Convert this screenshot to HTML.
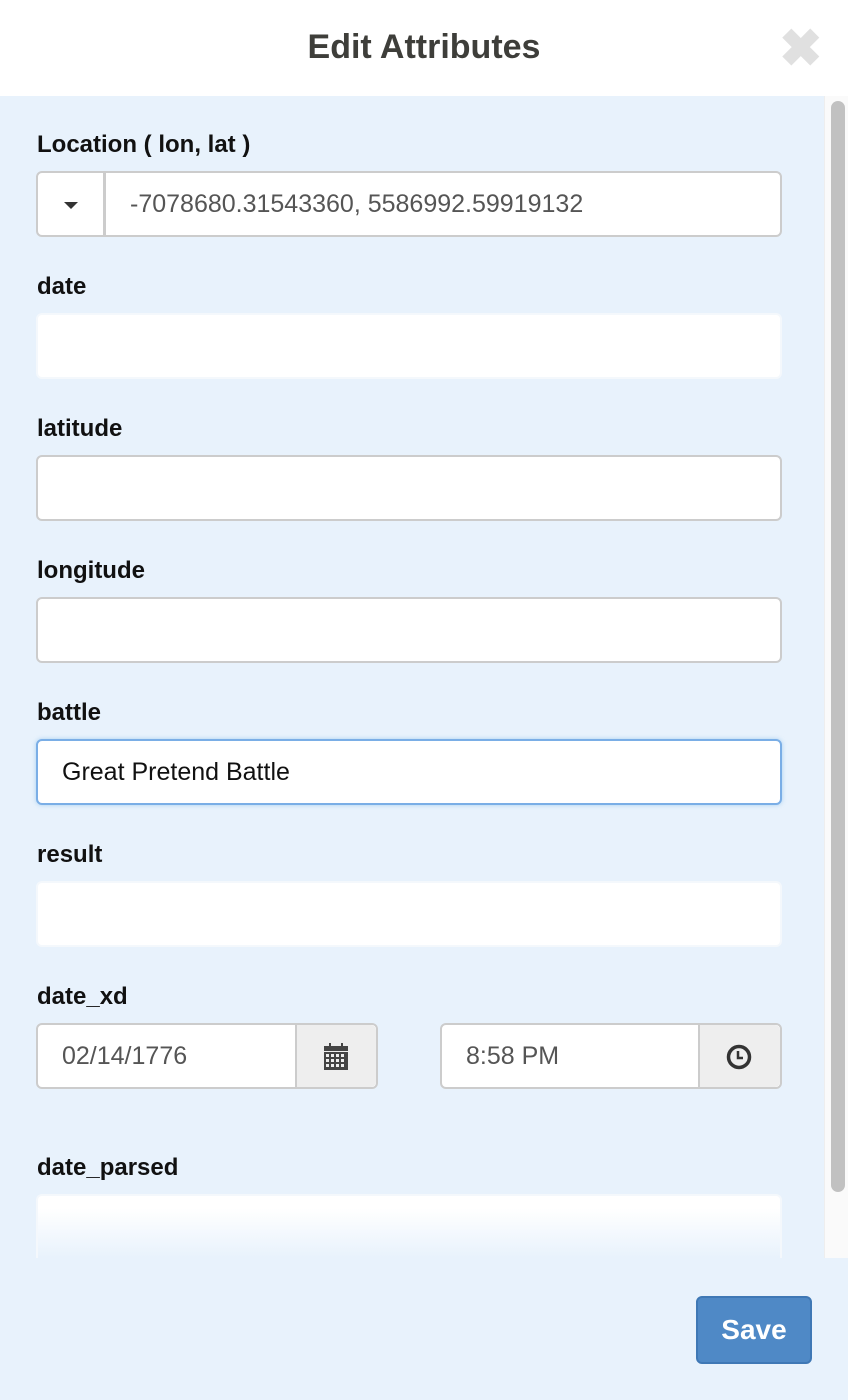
<!DOCTYPE html>
<html><head><style>
*{box-sizing:border-box;margin:0;padding:0}
body{width:848px;height:1400px;background:#e8f2fc;font-family:"Liberation Sans",sans-serif;position:relative;overflow:hidden}
.hdr{position:absolute;left:0;top:0;width:848px;height:96px;background:#fff}
.title{position:absolute;top:28px;width:848px;text-align:center;font-size:34px;font-weight:bold;color:#3e3e3a}
.x{position:absolute;left:779px;top:26px;font-size:52px;font-weight:bold;color:#e0e0e0;line-height:46px}
.lbl{position:absolute;left:37px;font-size:24px;font-weight:bold;color:#111}
.in{position:absolute;left:36px;width:746px;height:66px;background:#fff;border:2px solid #ccc;border-radius:6px;font-size:25px;color:#555;padding-left:24px;line-height:62px}
.nb{border-color:#f4f8fc}
.add{position:absolute;top:0;bottom:0;background:#eee;border-left:2px solid #ccc}
.track{position:absolute;left:824px;top:96px;width:24px;height:1162px;background:#fafafa;border-left:1px solid #eee}
.thumb{position:absolute;left:831px;top:101px;width:14px;height:1091px;background:#c1c1c1;border-radius:7px}
.save{position:absolute;left:696px;top:1296px;width:116px;height:68px;background:#4f89c6;border:2px solid #3f78b5;border-radius:6px;color:#fff;font-size:28px;font-weight:bold;text-align:center;line-height:64px}
</style></head><body>
<div class="hdr"><div class="title">Edit Attributes</div><div class="x">✖</div></div>
<div class="track"></div><div class="thumb"></div>
<div class="lbl" style="top:131px">Location ( lon, lat )</div>
<div class="in" style="top:171px;padding-left:92px"><div style="position:absolute;left:0;top:0;width:68px;height:62px;border-right:3px solid #ccc"><div style="position:absolute;left:26px;top:29px;border-left:7px solid transparent;border-right:7px solid transparent;border-top:7px solid #333"></div></div>-7078680.31543360, 5586992.59919132</div>
<div class="lbl" style="top:273px">date</div>
<div class="in nb" style="top:313px"></div>
<div class="lbl" style="top:415px">latitude</div>
<div class="in" style="top:455px"></div>
<div class="lbl" style="top:557px">longitude</div>
<div class="in" style="top:597px"></div>
<div class="lbl" style="top:699px">battle</div>
<div class="in" style="top:739px;border-color:#7aaee6;color:#111;box-shadow:0 0 4px rgba(102,175,233,.5)">Great Pretend Battle</div>
<div class="lbl" style="top:841px">result</div>
<div class="in nb" style="top:881px"></div>
<div class="lbl" style="top:983px">date_xd</div>
<div class="in" style="top:1023px;width:342px">02/14/1776<div class="add" style="left:257px;right:0;border-radius:0 5px 5px 0"><svg style="position:absolute;left:26px;top:18px" width="26" height="28" viewBox="0 0 26 28"><rect x="6" y="0" width="2" height="5" fill="#444"/><rect x="18" y="0" width="2" height="5" fill="#444"/><rect x="1" y="3" width="24" height="5" fill="#444"/><rect x="1" y="9" width="24" height="18" fill="#444"/><g fill="#eee"><rect x="3" y="11" width="3" height="3"/><rect x="8" y="11" width="3" height="3"/><rect x="13" y="11" width="3" height="3"/><rect x="18" y="11" width="3" height="3"/><rect x="3" y="16" width="3" height="3"/><rect x="8" y="16" width="3" height="3"/><rect x="13" y="16" width="3" height="3"/><rect x="18" y="16" width="3" height="3"/><rect x="3" y="21" width="3" height="3"/><rect x="8" y="21" width="3" height="3"/><rect x="13" y="21" width="3" height="3"/><rect x="18" y="21" width="3" height="3"/></g></svg></div></div>
<div class="in" style="top:1023px;left:440px;width:342px">8:58 PM<div class="add" style="left:256px;right:0;border-radius:0 5px 5px 0"><svg style="position:absolute;left:26px;top:19px" width="26" height="26" viewBox="0 0 26 26"><circle cx="13" cy="13" r="10.5" fill="none" stroke="#333" stroke-width="3.5"/><path d="M12 7v7h5" fill="none" stroke="#333" stroke-width="2.5"/></svg></div></div>
<div class="lbl" style="top:1154px">date_parsed</div>
<div class="in nb" style="top:1194px;height:64px;border-bottom:none;border-radius:6px 6px 0 0;background:linear-gradient(#fff 20%,#e8f2fc)"></div>
<div class="save">Save</div>
</body></html>
